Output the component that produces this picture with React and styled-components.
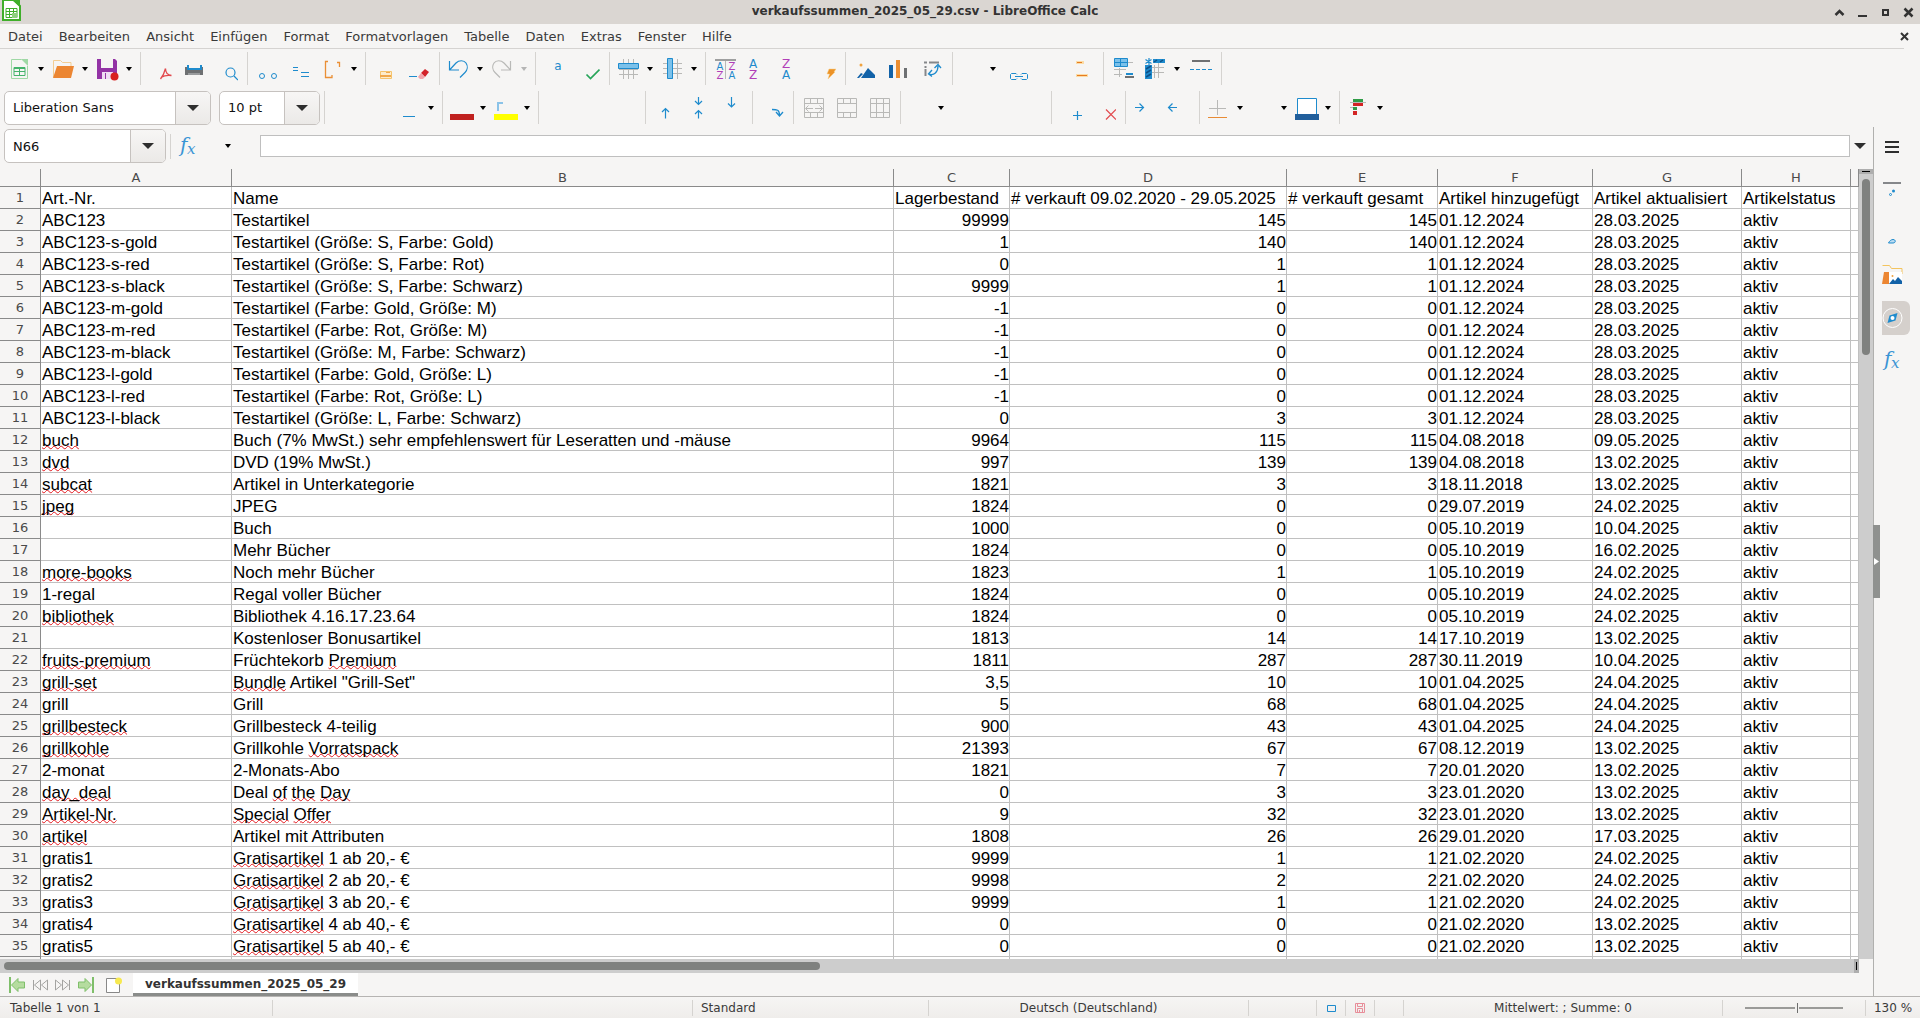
import React from 'react';
import styled, { createGlobalStyle, css } from 'styled-components';

const GlobalStyle = createGlobalStyle`
    * { box-sizing: border-box; }
    body {
        margin: 0;
        overflow: hidden;
        background: #f6f5f4;
        color: #3a3a3a;
        font-family: 'DejaVu Sans', sans-serif;
        font-size: 13px;
    }
    button, input, select {
        margin: 0;
        padding: 0;
        border: 0;
        background: none;
        color: inherit;
        font: inherit;
    }
`;

const Window = styled.div`
    height: 100vh;
    display: flex;
    flex-direction: column;
`;

const TitleBar = styled.header`
    flex: none;
    height: 24px;
    padding-left: 2px;
    display: flex;
    align-items: center;
    background: #dad6d2;
`;
const Title = styled.h1`
    flex: 1;
    margin: 0;
    padding-bottom: 2px;
    text-align: center;
    font-size: 12px;
    font-weight: 700;
    color: #333;
`;
const WindowButton = styled.button`
    width: 23px;
    height: 20px;
    display: flex;
    align-items: center;
    justify-content: center;
`;

const MenuBar = styled.nav`
    flex: none;
    height: 25px;
    margin-right: 16px;
    display: flex;
    align-items: center;
    border-bottom: 1px solid #d5d3d1;
`;
const MenuItem = styled.button`
    padding: 1px 8px 0;
    line-height: 23px;
`;
const CloseDocument = styled(WindowButton)`
    margin-left: auto;
    margin-right: -12px;
`;

const Toolbar = styled.div`
    flex: none;
    height: 39px;
    padding-left: 4px;
    display: flex;
    align-items: center;
`;
const Separator = styled.span`
    width: 1px;
    height: ${({ $height }) => $height || 33}px;
    margin: 0 3px 0 4px;
    background: #d5d3d0;
`;
const ToolButton = styled.button`
    width: ${({ $menu }) => ($menu ? 44 : 33)}px;
    height: 33px;
    padding-left: 4px;
    display: flex;
    align-items: center;
    gap: 6px;
    color: ${({ $disabled }) => ($disabled ? '#b5b5b5' : '#000')};
`;
const Arrow = styled.span`
    width: 0;
    height: 0;
    border: ${({ $size }) => $size || 3}px solid transparent;
    border-top: ${({ $size }) => $size || 4}px solid currentColor;
    border-bottom: 0;
`;

const Combo = styled.label`
    position: relative;
    width: ${({ $width }) => $width}px;
    height: 34px;
    margin-right: ${({ $gap }) => $gap || 0}px;
    display: flex;
    border: 1px solid #c6c2bf;
    border-radius: 5px;
    overflow: hidden;
    background: #fff;
`;
const ComboSelect = styled.select`
    flex: 1;
    padding-left: 8px;
    appearance: none;
    outline: none;
    color: #111;
`;
const ComboArrow = styled.span`
    position: absolute;
    top: 0;
    right: 0;
    bottom: 0;
    width: 35px;
    display: flex;
    align-items: center;
    justify-content: center;
    border-left: 1px solid #c6c2bf;
    background: linear-gradient(#f7f6f5, #ebe9e7);
    color: #2e2e2e;
    pointer-events: none;
`;

const Body = styled.div`
    flex: 1;
    min-height: 0;
    display: flex;
`;
const Main = styled.main`
    flex: 1;
    min-width: 0;
    display: flex;
    flex-direction: column;
`;
const FormulaBar = styled.div`
    flex: none;
    height: 42px;
    padding: 0 7px 4px 4px;
    display: flex;
    align-items: center;
`;
const FunctionMenu = styled.button`
    height: 24px;
    padding: 0 14px 0 18px;
    color: #000;
`;
const FormulaInput = styled.input`
    flex: 1;
    height: 22px;
    margin: 0 4px 0 15px;
    padding: 0 4px;
    border: 1px solid #bfbfbf;
    background: #fff;
    outline: none;
`;
const ExpandButton = styled.button`
    color: #2e2e2e;
`;

const SheetArea = styled.div`
    flex: 1;
    min-height: 0;
    display: flex;
`;
const SheetClip = styled.div`
    flex: 1;
    min-width: 0;
    overflow: hidden;
`;
const Table = styled.table`
    width: 100%;
    table-layout: fixed;
    border-spacing: 0;
    background: #fff;
`;
const headCell = css`
    padding: 0;
    background: #f6f5f4;
    border-right: 1px solid #8a8a8a;
    border-bottom: 1px solid #8a8a8a;
    font-size: 13px;
    font-weight: 400;
    text-align: center;
    color: #4a4a4a;
`;
const ColumnHead = styled.th`
    ${headCell}
    height: 18px;
    line-height: 17px;
`;
const RowHead = styled.th`
    ${headCell}
    height: 22px;
    line-height: 21px;
`;
const Cell = styled.td`
    height: 22px;
    padding: ${({ $number }) => ($number ? '3px 0 0' : '3px 0 0 1px')};
    border-right: 1px solid #c0c0c0;
    border-bottom: 1px solid #c0c0c0;
    overflow: hidden;
    white-space: nowrap;
    font-family: 'Liberation Sans', Arial, sans-serif;
    font-size: 17px;
    line-height: 18px;
    text-align: ${({ $number }) => ($number ? 'right' : 'left')};
    color: #000;
`;
const Misspelled = styled.span`
    text-decoration: underline wavy #e3191f 1px;
    text-decoration-skip-ink: none;
    text-underline-offset: -1px;
`;

const VerticalScroll = styled.div`
    width: 14px;
    background: #cdcdcd;
`;
const SplitRow = styled.div`
    height: 5px;
    padding: 2px 3px;
    background: #aeaeae;
`;
const SplitRowMark = styled.div`
    height: 1px;
    background: #000;
`;
const VerticalThumb = styled.div`
    width: 8px;
    height: 176px;
    margin: 5px auto 0 3px;
    border-radius: 4px;
    background: #7f817f;
`;
const HorizontalScroll = styled.div`
    flex: none;
    height: 14px;
    margin-right: 14px;
    padding-left: 4px;
    display: flex;
    align-items: center;
    justify-content: space-between;
    background: #cdcdcd;
`;
const HorizontalThumb = styled.div`
    width: 44%;
    height: 8px;
    border-radius: 4px;
    background: #7f817f;
`;
const SplitColumn = styled.div`
    width: 5px;
    height: 14px;
    padding: 3px 2px;
    background: #aeaeae;
`;
const SplitColumnMark = styled.div`
    width: 1px;
    height: 8px;
    background: #000;
`;

const TabBar = styled.div`
    flex: none;
    height: 23px;
    padding-left: 5px;
    display: flex;
    align-items: center;
`;
const TabTool = styled.button`
    width: 23px;
    height: 20px;
    display: flex;
    align-items: center;
    justify-content: center;
`;
const AddSheet = styled(TabTool)`
    margin: 0 8px 0 5px;
`;
const SheetTab = styled.button`
    height: 23px;
    padding: 2px 12px 0;
    border-bottom: 3px solid #8a8c8a;
    background: #fff;
    font-size: 12px;
    font-weight: 700;
    line-height: 18px;
    color: #333;
`;

const Sidebar = styled.aside`
    position: relative;
    width: 47px;
    padding: 4px 0 0 8px;
    display: flex;
    flex-direction: column;
    gap: 8px;
    border-left: 1px solid #b0b0ae;
`;
const SidebarButton = styled.button`
    width: 28px;
    height: 34px;
    display: flex;
    align-items: center;
    border-radius: 0 6px 6px 0;
    background: ${({ $active }) => ($active ? '#d5d0cc' : 'none')};
`;
const SidebarMenu = styled(SidebarButton)`
    margin-bottom: 2px;
`;
const SidebarHandle = styled.button`
    position: absolute;
    top: 398px;
    left: -1px;
    width: 7px;
    height: 73px;
    display: flex;
    align-items: center;
    background: #8f918f;
`;

const StatusBar = styled.footer`
    flex: none;
    height: 22px;
    padding-top: 3px;
    display: grid;
    grid-template-columns: 273fr 420fr 236fr 320fr 68fr 29px 29px 29px 319fr 143px 54px;
    border-top: 1px solid #b6b4b2;
    background: linear-gradient(#f6f5f4, #efedeb);
`;
const StatusCell = styled.div`
    height: 16px;
    padding: 0 ${({ $pad }) => $pad || 0}px;
    display: flex;
    align-items: center;
    justify-content: ${({ $align }) => $align || 'center'};
    border-right: ${({ $last }) => ($last ? '0' : '1px solid #d5d3d0')};
    font-size: 12px;
    white-space: nowrap;
`;
const ZoomSlider = styled.input`
    width: 98px;
    height: 12px;
    appearance: none;
    &::-webkit-slider-runnable-track {
        height: 2px;
        background: #9a9a98;
    }
    &::-webkit-slider-thumb {
        appearance: none;
        width: 4px;
        height: 10px;
        margin-top: -4px;
        border-left: 2px solid #f2f1ef;
        border-right: 1px solid #f2f1ef;
        background: #6e6e6e;
    }
`;

const BLUE = '#1e8bcd';
const GREY = '#b9b9b7';
const PURPLE = '#b13fb8';

const Svg = ({ size = 24, children }) => (
    <svg width={size} height={size} viewBox={`0 0 ${size} ${size}`} fill="none" aria-hidden="true">
        {children}
    </svg>
);

const Letter = ({ x, y, fill, size = 12, children }) => (
    <text x={x} y={y} fill={fill} fontSize={size} fontFamily="DejaVu Sans, sans-serif" textAnchor="middle">
        {children}
    </text>
);

const mergeFrame = <path d="M3.5 2.5h19v19h-19zM3.5 7.5h19M3.5 16.5h19M9.5 2.5v5M16.5 2.5v5M9.5 16.5v5M16.5 16.5v5" stroke={GREY} />;

const icons = {
    new: <>
        <path d="M3.5 2.5h10M19.5 9v12.5h-16v-19" stroke="#9fd8a5" />
        <path d="M13 2l7 7V2z" fill="#9fd8a5" />
        <path d="M6 10.5h11v8H6zM6 14.5h11M11.5 10.5v8" stroke="#45b36b" />
        <path d="M6 10h11v2H6z" fill="#45b36b" />
    </>,
    open: <>
        <path d="M1.5 20V3.5h7l2 2H19V9" stroke="#f3cd93" />
        <path d="M5 9h17l-3 12H1z" fill="#ec8632" />
    </>,
    save: <>
        <path d="M1 2h18l2 2v18H1z" fill="#9333a5" />
        <path d="M5 2h12v9H5z" fill="#f6f5f4" />
        <path d="M6 15h11v7H6z" fill="#efdcf3" />
        <path d="M9 16h1v6H9z" fill="#9333a5" />
        <circle cx="18.5" cy="19.5" r="4" fill="#d8201f" />
    </>,
    pdf: <path d="M17.5 11.5c-1 4-3 8-5 10.5M17.5 11.5c0 4 2.5 6.5 6 7M13 20.5c3-2 7-2.5 10.5-2" stroke="#e2494d" strokeWidth="1.3" />,
    print: <>
        <path d="M4 10h18v8H4z" fill="#6e7072" />
        <path d="M7 8h13v5H7z" fill="#f6f5f4" />
        <path d="M7 8v4h13V8" stroke={BLUE} strokeWidth="2" />
        <path d="M7 16h12v2H7z" fill="#9a9c9e" />
    </>,
    preview: <>
        <circle cx="16.5" cy="15.5" r="4.5" stroke={BLUE} strokeWidth="1.2" />
        <path d="M20 19l4 4" stroke={BLUE} strokeWidth="1.2" />
    </>,
    cut: <>
        <circle cx="7" cy="19" r="2.5" stroke={BLUE} />
        <circle cx="19" cy="19" r="2.5" stroke={BLUE} />
    </>,
    copy: <path d="M5 10.5h5M5 13.5h5M13 15.5h8M13 19.5h8" stroke={BLUE} />,
    paste: <>
        <path d="M7 4.5H4.5v16H11V18" stroke="#ea8f35" strokeWidth="1.3" />
        <path d="M16 5.5h2.5V10" stroke="#ea8f35" strokeWidth="1.3" />
    </>,
    clone: <>
        <path d="M7.5 14.5h11v7h-11z" fill="#fdeccb" stroke="#f5c46d" />
        <path d="M7 18h11v2H7zM13 15h4v1h-4z" fill="#f0a84c" />
    </>,
    clear: <>
        <path d="M3 19.5h8" stroke={BLUE} />
        <path d="M19 12l4 3-4 5-4-4z" fill="#d3222a" />
        <path d="M15 16l4 4-2 2h-3l-2-2z" fill="#f3a5ac" />
    </>,
    undo: <path d="M2.5 4v9H12M2.5 13L9 6c3-3 8-3 10 0 2 3 1.5 7-1 9.5l-5 5" stroke={BLUE} strokeWidth="1.2" />,
    redo: <path d="M19.5 4v9H10M19.5 13L13 6c-3-3-8-3-10 0-2 3-1.5 7 1 9.5l5 5" stroke={GREY} strokeWidth="1.2" />,
    spelling: <Letter x={15} y={13} fill={BLUE}>a</Letter>,
    check: <path d="M10.5 17.5l4 4 9-9" stroke="#27a55a" strokeWidth="1.7" />,
    row: <>
        <path d="M2 17.5h19M2 12.5h19M6.5 2v20M11.5 2v20M16.5 2v20" stroke={GREY} />
        <path d="M1.5 6.5h20v5h-20z" fill="#7cc1ea" stroke={BLUE} />
    </>,
    column: <>
        <path d="M2 6.5h19M2 11.5h19M2 16.5h19M11.5 2v20M16.5 2v20" stroke={GREY} />
        <path d="M6.5 1.5h5v20h-5z" fill="#7cc1ea" stroke={BLUE} />
    </>,
    sort: <>
        <path d="M2 3h21" stroke="#6e7072" strokeWidth="1.3" />
        <path d="M12.5 4v18" stroke={GREY} />
        <Letter x={7} y={13} fill={BLUE} size={10}>A</Letter>
        <Letter x={7} y={22} fill={PURPLE} size={10}>Z</Letter>
        <Letter x={19} y={13} fill={PURPLE} size={10}>Z</Letter>
        <Letter x={19} y={22} fill={BLUE} size={10}>A</Letter>
    </>,
    ascending: <>
        <Letter x={7} y={11} fill={BLUE}>A</Letter>
        <Letter x={7} y={22} fill={PURPLE}>Z</Letter>
    </>,
    descending: <>
        <Letter x={7} y={11} fill={PURPLE}>Z</Letter>
        <Letter x={7} y={22} fill={BLUE}>A</Letter>
    </>,
    filter: <path d="M17 12h7l-2 3h1l-7 7 1.5-5H15z" fill="#ec9227" stroke="#fbd28b" strokeWidth="0.5" />,
    image: <>
        <circle cx="8" cy="8" r="1.5" fill="#f0a23f" />
        <path d="M4 21l4-5 2 1-4 4zM8 21l7-10 3 3 4 4v3z" fill="#1262a8" />
    </>,
    chart: <>
        <path d="M3 8h4v13H3z" fill="#1262a8" />
        <path d="M10 3h4v18h-4z" fill="#ec8f33" />
        <path d="M18 11h3v10h-3z" fill="#6e7072" />
    </>,
    pivot: <>
        <path d="M5 5.5h3M10 5.5h10M6.5 9v2M6.5 12v7" stroke="#85878a" strokeWidth="2" />
        <path d="M10 17c5 2 9-2 9-8M15.5 11L19 7.5l3 3.5M13 13l-3.5 4 3.5 2.5" stroke={BLUE} strokeWidth="1.3" />
    </>,
    link: <path d="M13 17.5l-1-1H7.5l-1 1v4l1 1H12l1-1M17 17.5l1-1h4.5l1 1v4l-1 1H18l-1-1M11 19.5h8" stroke={BLUE} />,
    headers: <>
        <path d="M6 4h8v3H6zM6 17h12v3H6z" fill="#fbdca6" />
        <path d="M7 5h5v1H7zM7 18h10v1H7z" fill="#e77b21" />
    </>,
    printArea: <>
        <path d="M3 12.5h12M3 17.5h8M8.5 11v9M17 5.5h5" stroke={GREY} />
        <path d="M3.5 1.5h13v8h-13z" fill="#7cc1ea" stroke={BLUE} />
        <path d="M3 5.5h13M9.5 2v8" stroke={BLUE} />
        <path d="M15 16h7v2h-7z" fill={BLUE} />
        <path d="M14 19h9v2h-9z" fill="#6e7072" />
    </>,
    freeze: <>
        <path d="M8 10.5h12M8 15.5h12M10.5 8v13M14.5 6v15" stroke={GREY} />
        <path d="M1 8h7v14H1zM9 2h12v4H9z" fill={BLUE} />
        <path d="M2 12l5-3M2 16l5-3M2 20l5-3M10 5l3-2M16 5l3-2" stroke="#0e4f86" strokeWidth="1.5" />
        <path d="M5 1v7M1.5 2.5l6 4M7.5 2.5l-6 4" stroke={BLUE} strokeWidth="1.2" />
    </>,
    split: <>
        <path d="M4 4h18" stroke="#6e7072" strokeWidth="2" />
        <path d="M2 12.5h22" stroke={BLUE} strokeDasharray="4 2" />
    </>,
    underline: <path d="M5 20.5h12" stroke={BLUE} />,
    fontColor: <path d="M0 18h24v6H0z" fill="#c0211f" />,
    highlight: <>
        <path d="M4 15V7h5" stroke="#8bc3e8" strokeWidth="2" />
        <path d="M0 18h24v6H0z" fill="#ffff00" />
    </>,
    top: <path d="M12.5 22.5v-10M9 16l3.5-3.5L16 16" stroke={BLUE} strokeWidth="1.2" />,
    middle: <path d="M12.5 1v7.5M9 5l3.5 3.5L16 5M12.5 22.5v-8M9 18l3.5-3.5L16 18" stroke={BLUE} strokeWidth="1.2" />,
    bottom: <path d="M12.5 1v10M9 7.5l3.5 3.5L16 7.5" stroke={BLUE} strokeWidth="1.2" />,
    wrap: <path d="M12 13.5c5 0 7.5 0 7.5 6M16 16l3.5 4 3.5-4" stroke={BLUE} strokeWidth="1.3" />,
    merge: <>
        {mergeFrame}
        <path d="M5 12.5h7M14 12.5h7M7.5 9.5l-3 3 3 3M18.5 9.5l3 3-3 3" stroke={GREY} />
    </>,
    mergeCells: mergeFrame,
    unmerge: <>
        {mergeFrame}
        <path d="M9.5 7.5v9M16.5 7.5v9" stroke={GREY} />
    </>,
    addDecimal: <path d="M18.5 15v9M14 19.5h9" stroke={BLUE} strokeWidth="1.2" />,
    removeDecimal: <path d="M14 13.5l10 10M24 13.5l-10 10" stroke="#e2494d" strokeWidth="1.2" />,
    indent: <path d="M2 11.5h8.5M6.5 7.5l4 4-4 4" stroke={BLUE} strokeWidth="1.2" />,
    outdent: <path d="M11 11.5H2.5M6.5 7.5l-4 4 4 4" stroke={BLUE} strokeWidth="1.2" />,
    border: <>
        <path d="M10.5 4v15M2 12.5h17" stroke={GREY} />
        <path d="M1 21.5h19" stroke="#e88b35" />
    </>,
    borderColor: <>
        <path d="M2.5 2.5h19v16h-19z" fill="#fff" stroke={BLUE} />
        <path d="M0 18h24v6H0z" fill="#215f9c" />
    </>,
    conditional: <>
        <path d="M3 6.5h16M3 11.5h5" stroke={GREY} />
        <path d="M6 3h10v3H6zM6 11h4v3H6z" fill="#2f9c46" />
        <path d="M6 7h10v3H6zM6 15h4v4H6z" fill="#d32424" />
    </>,
};

const fx = (
    <g fill="#3a94d4" fontStyle="italic" fontFamily="DejaVu Serif, serif">
        <text x="2" y="18" fontSize="20">f</text>
        <text x="9" y="20" fontSize="15">x</text>
    </g>
);

const standardTools = [
    [['Neu', 'new', 1], ['Öffnen', 'open', 1], ['Speichern', 'save', 1]],
    [['Als PDF exportieren', 'pdf'], ['Drucken', 'print'], ['Druckvorschau', 'preview']],
    [['Ausschneiden', 'cut'], ['Kopieren', 'copy'], ['Einfügen', 'paste', 1]],
    [['Format übertragen', 'clone'], ['Formatierung löschen', 'clear']],
    [['Rückgängig', 'undo', 1], ['Wiederherstellen', 'redo', 1, 1]],
    [['Rechtschreibung', 'spelling'], ['Automatische Prüfung', 'check']],
    [['Zeile', 'row', 1], ['Spalte', 'column', 1]],
    [['Sortieren', 'sort'], ['Aufsteigend', 'ascending'], ['Absteigend', 'descending'], ['AutoFilter', 'filter']],
    [['Bild', 'image'], ['Diagramm', 'chart'], ['Pivot-Tabelle', 'pivot']],
    [['Sonderzeichen', '', 1], ['Hyperlink', 'link'], ['Kommentar', ''], ['Kopf- und Fußzeilen', 'headers']],
    [['Druckbereich', 'printArea'], ['Fixieren', 'freeze', 1], ['Fenster teilen', 'split']],
    [],
];

const formatTools = [
    [],
    [['Fett', ''], ['Kursiv', ''], ['Unterstrichen', 'underline', 1]],
    [['Schriftfarbe', 'fontColor', 1], ['Hintergrundfarbe', 'highlight', 1]],
    [['Linksbündig', ''], ['Zentriert', ''], ['Rechtsbündig', '']],
    [['Oben ausrichten', 'top'], ['Vertikal zentrieren', 'middle'], ['Unten ausrichten', 'bottom']],
    [['Textumbruch', 'wrap']],
    [['Verbinden und zentrieren', 'merge'], ['Zellen verbinden', 'mergeCells'], ['Zellen trennen', 'unmerge']],
    [['Währung', '', 1], ['Prozent', ''], ['Zahl', ''], ['Datum', '']],
    [['Dezimalstelle hinzufügen', 'addDecimal'], ['Dezimalstelle löschen', 'removeDecimal']],
    [['Einzug vergrößern', 'indent'], ['Einzug verkleinern', 'outdent']],
    [['Umrandung', 'border', 1], ['Umrandungsstil', '', 1], ['Umrandungsfarbe', 'borderColor', 1]],
    [['Bedingte Formatierung', 'conditional', 1]],
];

const menus = ['Datei', 'Bearbeiten', 'Ansicht', 'Einfügen', 'Format', 'Formatvorlagen', 'Tabelle', 'Daten', 'Extras', 'Fenster', 'Hilfe'];

const columnWidths = [41, 191, 662, 116, 277, 151, 155, 149, 109];
const columnNames = ['A', 'B', 'C', 'D', 'E', 'F', 'G', 'H'];

// words between tildes are flagged by the spell checker
const rows = [
    ['Art.-Nr.', 'Name', 'Lagerbestand', '# verkauft 09.02.2020 - 29.05.2025', '# verkauft gesamt', 'Artikel hinzugefügt', 'Artikel aktualisiert', 'Artikelstatus'],
    ['ABC123', 'Testartikel', '99999', '145', '145', '01.12.2024', '28.03.2025', 'aktiv'],
    ['ABC123-s-gold', 'Testartikel (Größe: S, Farbe: Gold)', '1', '140', '140', '01.12.2024', '28.03.2025', 'aktiv'],
    ['ABC123-s-red', 'Testartikel (Größe: S, Farbe: Rot)', '0', '1', '1', '01.12.2024', '28.03.2025', 'aktiv'],
    ['ABC123-s-black', 'Testartikel (Größe: S, Farbe: Schwarz)', '9999', '1', '1', '01.12.2024', '28.03.2025', 'aktiv'],
    ['ABC123-m-gold', 'Testartikel (Farbe: Gold, Größe: M)', '-1', '0', '0', '01.12.2024', '28.03.2025', 'aktiv'],
    ['ABC123-m-red', 'Testartikel (Farbe: Rot, Größe: M)', '-1', '0', '0', '01.12.2024', '28.03.2025', 'aktiv'],
    ['ABC123-m-black', 'Testartikel (Größe: M, Farbe: Schwarz)', '-1', '0', '0', '01.12.2024', '28.03.2025', 'aktiv'],
    ['ABC123-l-gold', 'Testartikel (Farbe: Gold, Größe: L)', '-1', '0', '0', '01.12.2024', '28.03.2025', 'aktiv'],
    ['ABC123-l-red', 'Testartikel (Farbe: Rot, Größe: L)', '-1', '0', '0', '01.12.2024', '28.03.2025', 'aktiv'],
    ['ABC123-l-black', 'Testartikel (Größe: L, Farbe: Schwarz)', '0', '3', '3', '01.12.2024', '28.03.2025', 'aktiv'],
    ['~buch~', 'Buch (7% MwSt.) sehr empfehlenswert für Leseratten und -mäuse', '9964', '115', '115', '04.08.2018', '09.05.2025', 'aktiv'],
    ['~dvd~', 'DVD (19% MwSt.)', '997', '139', '139', '04.08.2018', '13.02.2025', 'aktiv'],
    ['~subcat~', 'Artikel in Unterkategorie', '1821', '3', '3', '18.11.2018', '13.02.2025', 'aktiv'],
    ['~jpeg~', 'JPEG', '1824', '0', '0', '29.07.2019', '24.02.2025', 'aktiv'],
    ['', 'Buch', '1000', '0', '0', '05.10.2019', '10.04.2025', 'aktiv'],
    ['', 'Mehr Bücher', '1824', '0', '0', '05.10.2019', '16.02.2025', 'aktiv'],
    ['~more-books~', 'Noch mehr Bücher', '1823', '1', '1', '05.10.2019', '24.02.2025', 'aktiv'],
    ['1-regal', 'Regal voller Bücher', '1824', '0', '0', '05.10.2019', '24.02.2025', 'aktiv'],
    ['~bibliothek~', 'Bibliothek 4.16.17.23.64', '1824', '0', '0', '05.10.2019', '24.02.2025', 'aktiv'],
    ['', 'Kostenloser Bonusartikel', '1813', '14', '14', '17.10.2019', '13.02.2025', 'aktiv'],
    ['~fruits-premium~', 'Früchtekorb ~Premium~', '1811', '287', '287', '30.11.2019', '10.04.2025', 'aktiv'],
    ['~grill-set~', '~Bundle~ Artikel "Grill-Set"', '3,5', '10', '10', '01.04.2025', '24.04.2025', 'aktiv'],
    ['grill', 'Grill', '5', '68', '68', '01.04.2025', '24.04.2025', 'aktiv'],
    ['~grillbesteck~', 'Grillbesteck 4-teilig', '900', '43', '43', '01.04.2025', '24.04.2025', 'aktiv'],
    ['~grillkohle~', 'Grillkohle ~Vorratspack~', '21393', '67', '67', '08.12.2019', '13.02.2025', 'aktiv'],
    ['2-monat', '2-Monats-Abo', '1821', '7', '7', '20.01.2020', '13.02.2025', 'aktiv'],
    ['~day_deal~', 'Deal ~of~ ~the~ ~Day~', '0', '3', '3', '23.01.2020', '13.02.2025', 'aktiv'],
    ['~Artikel-Nr.~', '~Special~ ~Offer~', '9', '32', '32', '23.01.2020', '13.02.2025', 'aktiv'],
    ['~artikel~', 'Artikel mit Attributen', '1808', '26', '26', '29.01.2020', '17.03.2025', 'aktiv'],
    ['gratis1', '~Gratisartikel~ 1 ab 20,- €', '9999', '1', '1', '21.02.2020', '24.02.2025', 'aktiv'],
    ['gratis2', '~Gratisartikel~ 2 ab 20,- €', '9998', '2', '2', '21.02.2020', '24.02.2025', 'aktiv'],
    ['gratis3', '~Gratisartikel~ 3 ab 20,- €', '9999', '1', '1', '21.02.2020', '24.02.2025', 'aktiv'],
    ['gratis4', '~Gratisartikel~ 4 ab 40,- €', '0', '0', '0', '21.02.2020', '13.02.2025', 'aktiv'],
    ['gratis5', '~Gratisartikel~ 5 ab 40,- €', '0', '0', '0', '21.02.2020', '13.02.2025', 'aktiv'],
    ['', '', '', '', '', '', '', ''],
];

const CellText = ({ text }) =>
    text.split('~').map((part, i) => (i % 2 ? <Misspelled key={i}>{part}</Misspelled> : part));

const ToolGroups = ({ groups }) =>
    groups.map((group, g) => (
        <React.Fragment key={g}>
            {g > 0 && <Separator />}
            {group.map(([label, icon, menu, disabled]) => (
                <ToolButton key={label} type="button" aria-label={label} $menu={menu} $disabled={disabled}>
                    <Svg>{icons[icon]}</Svg>
                    {menu && <Arrow />}
                </ToolButton>
            ))}
        </React.Fragment>
    ));

const ComboBox = ({ label, value, width, gap }) => (
    <Combo $width={width} $gap={gap}>
        <ComboSelect aria-label={label} defaultValue={value}>
            <option>{value}</option>
        </ComboSelect>
        <ComboArrow><Arrow $size={6} /></ComboArrow>
    </Combo>
);

const Sheet = () => (
    <Table>
        <colgroup>
            {columnWidths.map((width, i) => <col key={i} width={width} />)}
            <col />
        </colgroup>
        <thead>
            <tr>
                <ColumnHead />
                {columnNames.map((name) => <ColumnHead key={name} scope="col">{name}</ColumnHead>)}
                <ColumnHead />
            </tr>
        </thead>
        <tbody>
            {rows.map((row, r) => (
                <tr key={r}>
                    <RowHead scope="row">{r < 35 ? r + 1 : ''}</RowHead>
                    {row.map((text, c) => (
                        <Cell key={c} $number={r > 0 && c > 1 && c < 5}><CellText text={text} /></Cell>
                    ))}
                    <Cell />
                </tr>
            ))}
        </tbody>
    </Table>
);

const App = () => {
    return (
        <Window>
            <GlobalStyle />
            <TitleBar>
                <svg width="20" height="24" viewBox="0 0 20 24" aria-hidden="true">
                    <path d="M1 0h11l6 6v14H1z" fill="#fff" stroke="#3fae2a" strokeWidth="2" />
                    <path d="M10 0h8v7z" fill="#3fae2a" />
                    <path d="M4 8.5h11v9H4zM4 11.5h11M4 14.5h11M7.5 8.5v9M11.5 8.5v9" fill="none" stroke="#3fae2a" />
                    <path d="M10 13h5v5h-5z" fill="#8fd080" />
                </svg>
                <Title>verkaufssummen_2025_05_29.csv - LibreOffice Calc</Title>
                <WindowButton type="button" aria-label="Einrollen">
                    <Svg size={11}><path d="M1.5 8l4-4 4 4" stroke="#333" strokeWidth="2.5" /></Svg>
                </WindowButton>
                <WindowButton type="button" aria-label="Minimieren">
                    <Svg size={11}><path d="M1 9h9" stroke="#333" strokeWidth="2" /></Svg>
                </WindowButton>
                <WindowButton type="button" aria-label="Maximieren">
                    <Svg size={11}><path d="M3 3h5v5H3z" stroke="#333" strokeWidth="2" /></Svg>
                </WindowButton>
                <WindowButton type="button" aria-label="Schließen">
                    <Svg size={11}><path d="M1.5 1.5l8 8M9.5 1.5l-8 8" stroke="#333" strokeWidth="2.5" /></Svg>
                </WindowButton>
            </TitleBar>
            <MenuBar>
                {menus.map((menu) => <MenuItem key={menu} type="button">{menu}</MenuItem>)}
                <CloseDocument type="button" aria-label="Dokument schließen">
                    <Svg size={9}><path d="M1 1l7 7M8 1L1 8" stroke="#333" strokeWidth="2" /></Svg>
                </CloseDocument>
            </MenuBar>
            <Toolbar>
                <ToolGroups groups={standardTools} />
            </Toolbar>
            <Toolbar>
                <ComboBox label="Schriftart" value="Liberation Sans" width={207} gap={8} />
                <ComboBox label="Schriftgröße" value="10 pt" width={101} />
                <ToolGroups groups={formatTools} />
            </Toolbar>
            <Body>
                <Main>
                    <FormulaBar>
                        <ComboBox label="Namenfeld" value="N66" width={162} />
                        <Separator $height={25} />
                        <ToolButton type="button" aria-label="Funktionsassistent"><Svg>{fx}</Svg></ToolButton>
                        <FunctionMenu type="button" aria-label="Funktion auswählen"><Arrow as="div" /></FunctionMenu>
                        <FormulaInput aria-label="Eingabezeile" />
                        <ExpandButton type="button" aria-label="Eingabezeile erweitern"><Arrow as="div" $size={6} /></ExpandButton>
                    </FormulaBar>
                    <SheetArea>
                        <SheetClip><Sheet /></SheetClip>
                        <VerticalScroll>
                            <SplitRow><SplitRowMark /></SplitRow>
                            <VerticalThumb />
                        </VerticalScroll>
                    </SheetArea>
                    <HorizontalScroll>
                        <HorizontalThumb />
                        <SplitColumn><SplitColumnMark /></SplitColumn>
                    </HorizontalScroll>
                    <TabBar>
                        <TabTool type="button" aria-label="Erste Tabelle">
                            <Svg size={16}>
                                <path d="M1 0v16" stroke="#7fbf6a" strokeWidth="2" />
                                <path d="M2.5 8L9 1.5V5h6.5v6H9v3.5z" fill="#b5dc9f" stroke="#7fbf6a" />
                            </Svg>
                        </TabTool>
                        <TabTool type="button" aria-label="Vorherige Tabelle">
                            <Svg size={16}><path d="M1.5 3v10M8.5 3v10l-6-5zM15.5 3v10l-6-5z" stroke="#a3a3a1" /></Svg>
                        </TabTool>
                        <TabTool type="button" aria-label="Nächste Tabelle">
                            <Svg size={16}><path d="M14.5 3v10M7.5 3v10l6-5zM0.5 3v10l6-5z" stroke="#a3a3a1" /></Svg>
                        </TabTool>
                        <TabTool type="button" aria-label="Letzte Tabelle">
                            <Svg size={16}>
                                <path d="M15 0v16" stroke="#7fbf6a" strokeWidth="2" />
                                <path d="M13.5 8L7 1.5V5H0.5v6H7v3.5z" fill="#b5dc9f" stroke="#7fbf6a" />
                            </Svg>
                        </TabTool>
                        <AddSheet type="button" aria-label="Tabelle hinzufügen">
                            <Svg size={16}>
                                <path d="M0.5 1.5h13v14h-13z" fill="#fff" stroke="#888" />
                                <circle cx="12.5" cy="4" r="3.5" fill="#f7e94f" />
                            </Svg>
                        </AddSheet>
                        <SheetTab type="button">verkaufssummen_2025_05_29</SheetTab>
                    </TabBar>
                </Main>
                <Sidebar>
                    <SidebarMenu type="button" aria-label="Seitenleisteneinstellungen">
                        <Svg><path d="M3 6h14M3 11h14M3 16h14" stroke="#2e2e2e" strokeWidth="2" /></Svg>
                    </SidebarMenu>
                    <SidebarButton type="button" aria-label="Eigenschaften">
                        <Svg>
                            <path d="M1 3h18" stroke="#85878a" strokeWidth="2" />
                            <circle cx="11.5" cy="11" r="1.5" fill={BLUE} />
                            <circle cx="8.5" cy="14.5" r="1" stroke={BLUE} />
                        </Svg>
                    </SidebarButton>
                    <SidebarButton type="button" aria-label="Formatvorlagen">
                        <Svg>
                            <path d="M6.5 21c1-2 2.5-3.5 4.5-3.5 3 0 3 3.5 0 3.5z" fill="#bcdcf2" stroke={BLUE} />
                        </Svg>
                    </SidebarButton>
                    <SidebarButton type="button" aria-label="Galerie">
                        <Svg>
                            <path d="M0.5 1.5h7l2 3H20V10" stroke="#f3c45f" />
                            <path d="M2 8h5v12H0z" fill="#ec8632" />
                            <path d="M7 8h13v12H7z" fill="#fff" />
                            <circle cx="10.5" cy="12" r="1" fill="#f0a23f" />
                            <path d="M7 20l4-5 2 2 3-4 4 4v3z" fill="#1262a8" />
                        </Svg>
                    </SidebarButton>
                    <SidebarButton type="button" aria-label="Navigator" $active>
                        <Svg>
                            <circle cx="10.5" cy="12" r="9.5" stroke="#fff" />
                            <path d="M15.5 7l-2 7.5-8 2.5 2-7.5z" fill={BLUE} />
                            <circle cx="10.5" cy="12" r="2" fill="#fff" />
                        </Svg>
                    </SidebarButton>
                    <SidebarButton type="button" aria-label="Funktionen"><Svg>{fx}</Svg></SidebarButton>
                    <SidebarHandle type="button" aria-label="Seitenleiste ausblenden">
                        <Svg size={7}><path d="M1 0l5 3.5L1 7z" fill="#fff" /></Svg>
                    </SidebarHandle>
                </Sidebar>
            </Body>
            <StatusBar>
                <StatusCell $align="flex-start" $pad={10}>Tabelle 1 von 1</StatusCell>
                <StatusCell />
                <StatusCell $align="flex-start" $pad={8}>Standard</StatusCell>
                <StatusCell>Deutsch (Deutschland)</StatusCell>
                <StatusCell />
                <StatusCell><Svg size={10}><path d="M1.5 2.5h8v6h-8z" stroke={BLUE} /></Svg></StatusCell>
                <StatusCell>
                    <Svg size={10}><path d="M0.5 0.5h9v9h-9zM2.5 0.5v3h5v-3M2.5 9.5v-4h5v4M4.5 7v2" stroke="#e88d99" /></Svg>
                </StatusCell>
                <StatusCell />
                <StatusCell>Mittelwert: ; Summe: 0</StatusCell>
                <StatusCell><ZoomSlider type="range" aria-label="Maßstab" defaultValue={53} /></StatusCell>
                <StatusCell $last>130 %</StatusCell>
            </StatusBar>
        </Window>
    );
};

export default App;
